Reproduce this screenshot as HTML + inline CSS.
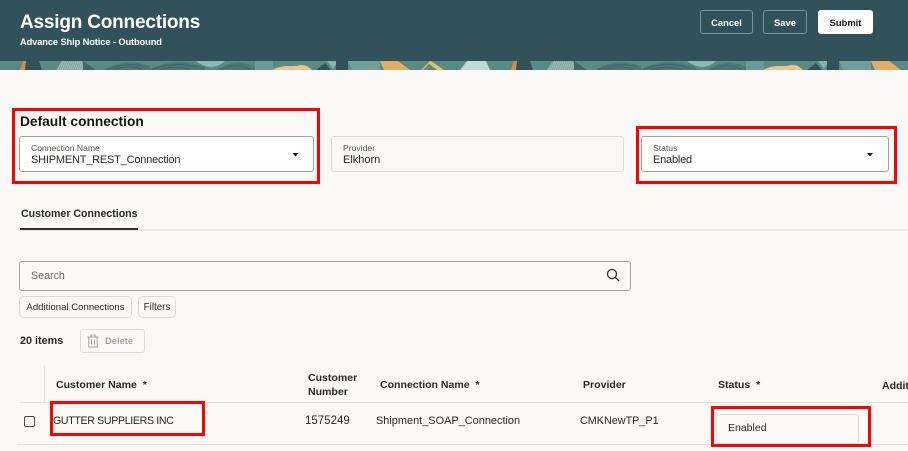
<!DOCTYPE html>
<html lang="en">
<head>
<meta charset="utf-8">
<title>Assign Connections</title>
<style>
html,body{margin:0;padding:0}
body{width:908px;height:451px;overflow:hidden;background:#fbf9f8;position:relative;font-family:"Liberation Sans",sans-serif;color:#161513}
.a{position:absolute;white-space:nowrap}
.box{position:absolute;box-sizing:border-box;border-radius:3px}
.red{position:absolute;box-sizing:border-box;border:3px solid #f00}
.btn{position:absolute;box-sizing:border-box;border-radius:3px;text-align:center;font-weight:bold;font-size:9.4px}
.lab{font-size:8.6px;color:#55524e}
.val{font-size:11px;color:#2b2926;letter-spacing:-.2px}
.th{font-size:10.55px;font-weight:bold;color:#2b2926}
.td{font-size:10.8px;color:#2b2926}
</style>
</head>
<body>
<div class="a" style="left:0;top:0;width:908px;height:61px;background:#32525a"></div>
<svg class="a" style="left:0;top:61px;filter:blur(.35px)" width="908" height="9" viewBox="0 0 908 9">
<defs>
<pattern id="hatch" width="2" height="2" patternUnits="userSpaceOnUse" patternTransform="rotate(20)">
<rect width="2" height="2" fill="#9cbdba"/><rect width="1" height="2" fill="#7ea5a1"/>
</pattern>
<g id="tile">
<polygon points="20,9 23,0 27,0 25,9" fill="#d9884e"/>
<polygon points="26,0 39,0 42,9 25,9" fill="#32525a"/>
<polygon points="56,9 62,0 82,0 85,9" fill="url(#hatch)"/>
<path d="M83 0L96 9H83Z" fill="#436669"/>
<path d="M104 9Q125 -4 150 5V9Z" fill="#4e7676"/>
<path d="M107 9Q126 0 146 6M113 9Q127 3 142 8" fill="none" stroke="#3f6265" stroke-width=".8"/>
<path d="M148 9Q175 -5 205 6V9Z" fill="#4e7676"/>
<path d="M152 9Q175 -1 199 7M160 9Q175 3 191 9" fill="none" stroke="#3f6265" stroke-width=".8"/>
<path d="M196 0H225Q212 12 196 0Z" fill="#8fb8b6"/>
<path d="M216 9Q235 -4 255 6V9Z" fill="#4e7676"/>
<path d="M221 9Q236 1 250 8" fill="none" stroke="#3f6265" stroke-width=".8"/>
<rect x="255" y="0" width="18" height="9" fill="#6e9a95"/>
<path d="M272 9Q279 5 288 5Q296 5.500 300 4Q306 3 312 9Z" fill="#edc388"/>
<path d="M316 9L325 2L331 9Z" fill="#32525a"/>
<path d="M327 0H338L333 8Z" fill="#8cb2ae"/>
<polygon points="336,0 348,0 348,9 336,9" fill="#32525a"/>
<polygon points="348,0 380,0 380,9 352,9" fill="#729e99"/>
<polygon points="380,0 398,0 410,9 384,9" fill="#e3ae63"/>
<path d="M422 9L431 0" stroke="#e3ae63" stroke-width="1.5"/>
<path d="M431 0L444 9H437L428 2Z" fill="#eac064"/>
<polygon points="467,0 486,0 490,9 460,9" fill="#bfd8d8"/>
</g>
</defs>
<rect width="908" height="9" fill="#5a8a84"/>
<use href="#tile"/>
<use href="#tile" x="491"/>
</svg>

<div class="a" style="left:20px;top:11px;font-size:19px;line-height:24px;font-weight:bold;color:#fff;letter-spacing:-.2px">Assign Connections</div>
<div class="a" style="left:20px;top:36px;font-size:9.3px;line-height:13px;font-weight:bold;color:#fff;letter-spacing:-.11px">Advance Ship Notice - Outbound</div>
<div class="btn" style="left:700px;top:10px;width:53px;height:24px;line-height:23px;border:1px solid #7b9697;color:#fff">Cancel</div>
<div class="btn" style="left:763px;top:10px;width:44px;height:24px;line-height:23px;border:1px solid #7b9697;color:#fff">Save</div>
<div class="btn" style="left:818px;top:10px;width:55px;height:24px;line-height:25px;background:#fff;color:#161513">Submit</div>

<div class="red" style="left:12px;top:108px;width:308px;height:76px"></div>
<div class="a" style="left:20px;top:113px;font-size:13.75px;line-height:18px;font-weight:bold;color:#161513">Default connection</div>
<div class="box" style="left:19px;top:136px;width:295px;height:36px;background:#fff;border:1px solid #a5a29e"></div>
<div class="a lab" style="left:31px;top:142px;line-height:12px">Connection Name</div>
<div class="a val" style="left:31px;top:153px;line-height:15px">SHIPMENT_REST_Connection</div>
<svg class="a" style="left:291px;top:151px" width="10" height="7"><path d="M1.5 2H7.500L4.500 5.500Z" fill="#161513"/></svg>

<div class="box" style="left:331px;top:136px;width:293px;height:36px;border:1px solid #dfdcd8"></div>
<div class="a lab" style="left:343px;top:142px;line-height:12px">Provider</div>
<div class="a val" style="left:343px;top:153px;line-height:15px;letter-spacing:0">Elkhorn</div>

<div class="red" style="left:636px;top:126px;width:261px;height:58px"></div>
<div class="box" style="left:641px;top:136px;width:248px;height:36px;background:#fff;border:1px solid #a5a29e"></div>
<div class="a lab" style="left:653px;top:142px;line-height:12px">Status</div>
<div class="a val" style="left:653px;top:153px;line-height:15px">Enabled</div>
<svg class="a" style="left:865px;top:151px" width="10" height="7"><path d="M2 2H8L5 5.500Z" fill="#161513"/></svg>

<div class="a" style="left:21px;top:207px;font-size:10.6px;line-height:14px;font-weight:bold;color:#2b2926">Customer Connections</div>
<div class="a" style="left:20px;top:229px;width:888px;height:2px;background:#ebe8e5"></div>
<div class="a" style="left:20px;top:228px;width:118px;height:2px;background:#312d2a"></div>

<div class="box" style="left:19px;top:261px;width:612px;height:30px;border:1px solid #a5a29e"></div>
<div class="a" style="left:31px;top:269px;font-size:10.7px;line-height:15px;color:#6b6864">Search</div>
<svg class="a" style="left:605px;top:267px" width="16" height="16" viewBox="0 0 16 16" fill="none" stroke="#312d2a" stroke-width="1.3"><circle cx="7" cy="7" r="4.500"/><path d="M10.400 10.400L14 14"/></svg>

<div class="box" style="left:19px;top:296px;width:113px;height:22px;border:1px solid #dfdcd8;border-radius:5px;text-align:center;font-size:9.6px;line-height:21px;color:#2b2926">Additional Connections</div>
<div class="box" style="left:138px;top:296px;width:38px;height:22px;border:1px solid #dfdcd8;border-radius:5px;text-align:center;font-size:9.8px;line-height:21px;color:#2b2926">Filters</div>

<div class="a" style="left:20px;top:334px;font-size:10.8px;line-height:15px;font-weight:bold;color:#2b2926">20 items</div>
<div class="box" style="left:80px;top:329px;width:65px;height:24px;border:1px solid #dfdcd8"></div>
<svg class="a" style="left:86px;top:334px" width="14" height="14" viewBox="0 0 14 14" fill="none" stroke="#a5a29e" stroke-width="1"><path d="M1.500 3H12.500M5 3V1H9V3M2.800 3V13H11.200V3M5.500 5.500V10.500M8.500 5.500V10.500"/></svg>
<div class="a" style="left:105px;top:334px;font-size:9.4px;line-height:14px;font-weight:bold;color:#a9a6a2">Delete</div>

<div class="a" style="left:44px;top:366px;width:1px;height:37px;background:#e4e1dd"></div>
<div class="a" style="left:20px;top:402px;width:888px;height:1px;background:#e4e1dd"></div>
<div class="a" style="left:17px;top:444px;width:891px;height:1px;background:#e4e1dd"></div>

<div class="a th" style="left:56px;top:378px;line-height:14px">Customer Name&nbsp; *</div>
<div class="a th" style="left:308px;top:372px;line-height:13.5px">Customer<br>Number</div>
<div class="a th" style="left:380px;top:378px;line-height:14px">Connection Name&nbsp; *</div>
<div class="a th" style="left:583px;top:378px;line-height:14px">Provider</div>
<div class="a th" style="left:718px;top:378px;line-height:14px">Status&nbsp; *</div>
<div class="a th" style="left:882px;top:379px;line-height:14px">Additional</div>

<div class="box" style="left:24px;top:416px;width:11px;height:11px;border:1.4px solid #4a4744;border-radius:2px"></div>
<div class="a td" style="left:53px;top:414px;line-height:15px;font-size:10.6px;letter-spacing:-.33px">GUTTER SUPPLIERS INC</div>
<div class="red" style="left:50px;top:401px;width:155px;height:35px"></div>
<div class="a td" style="left:305px;top:414px;line-height:15px;font-size:11.500px">1575249</div>
<div class="a td" style="left:376px;top:414px;line-height:15px;font-size:10.950px">Shipment_SOAP_Connection</div>
<div class="a td" style="left:580px;top:414px;line-height:15px">CMKNewTP_P1</div>

<div class="box" style="left:716px;top:414px;width:143px;height:30px;border:1px solid #dfdcd8"></div>
<div class="a td" style="left:728px;top:421px;line-height:15px;font-size:10.500px">Enabled</div>
<div class="red" style="left:711px;top:406px;width:160px;height:41px"></div>
</body>
</html>
